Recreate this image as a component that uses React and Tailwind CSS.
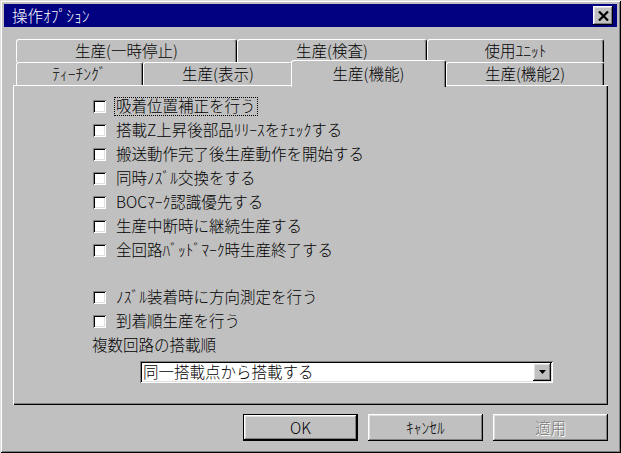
const raised =
  "shadow-[inset_-1px_-1px_0_#000,inset_1px_1px_0_#fff,inset_-2px_-2px_0_#808080,inset_2px_2px_0_#dfdfdf]"

const Checkbox = ({ label, focused = false }) => (
  <div className="flex items-center h-[24px] pl-[80px]">
    <span className="w-[13px] h-[13px] shrink-0 bg-white shadow-[inset_1px_1px_0_#808080,inset_-1px_-1px_0_#fff,inset_2px_2px_0_#000,inset_-2px_-2px_0_#dfdfdf]" />
    <span
      className={`ml-[8px] h-[19px] flex items-center px-[1px] border ${
        focused ? "border-dotted border-black" : "border-transparent"
      }`}
    >
      {label}
    </span>
  </div>
)

const Tab = ({ label, width }) => (
  <div
    className={`${width} h-full flex items-center justify-center border-l border-t border-white border-r border-r-black rounded-t-[3px] shadow-[inset_-1px_0_0_#808080]`}
  >
    {label}
  </div>
)

const Button = ({ children, isDefault = false, disabled = false }) => (
  <div
    className={`w-[115px] h-[27px] flex items-center justify-center ${
      isDefault ? "border border-black" : ""
    }`}
  >
    <div className={`w-full h-full flex items-center justify-center ${raised}`}>
      <span className={disabled ? "text-[#808080] [text-shadow:1px_1px_0_#fff]" : ""}>{children}</span>
    </div>
  </div>
)

export default function App() {
  const firstGroup = [
    "搭載Z上昇後部品ﾘﾘｰｽをﾁｪｯｸする",
    "搬送動作完了後生産動作を開始する",
    "同時ﾉｽﾞﾙ交換をする",
    "BOCﾏｰｸ認識優先する",
    "生産中断時に継続生産する",
    "全回路ﾊﾞｯﾄﾞﾏｰｸ時生産終了する",
  ]

  return (
    <div className="w-[621px] h-[453px] bg-[#c0c0c0] text-black text-[15.5px] font-light leading-none font-['Noto_Sans_CJK_JP',sans-serif] shadow-[inset_1px_1px_0_#dfdfdf,inset_-1px_-1px_0_#000,inset_2px_2px_0_#fff,inset_-2px_-2px_0_#808080] pt-[4px] flex flex-col">
      {/* title bar */}
      <div className="mx-[4px] h-[23px] bg-[#000080] flex items-center pl-[8px] pr-[4px]">
        <span className="text-white">操作ｵﾌﾟｼｮﾝ</span>
        <div className={`ml-auto w-[20px] h-[19px] bg-[#c0c0c0] flex items-center justify-center ${raised}`}>
          <svg width="11" height="10" viewBox="0 0 11 10">
            <path d="M1 0.5 L10 9.5 M10 0.5 L1 9.5" stroke="#000" strokeWidth="2.2" />
          </svg>
        </div>
      </div>

      {/* tabs + panel */}
      <div className="mt-[12px] px-[13px]">
        <div className="flex pl-[3px] h-[23px]">
          <Tab label="生産(一時停止)" width="w-[221px]" />
          <Tab label="生産(検査)" width="w-[190px]" />
          <Tab label="使用ﾕﾆｯﾄ" width="w-[177px]" />
        </div>
        <div className="flex pl-[3px] h-[23px]">
          <Tab label="ﾃｨｰﾁﾝｸﾞ" width="w-[127px]" />
          <Tab label="生産(表示)" width="w-[150px]" />
          <div className="relative z-10 -ml-[2px] -mt-[2px] w-[155px] h-[27px] bg-[#c0c0c0] flex justify-center pt-[5px] border-l border-t border-white border-r border-r-black rounded-t-[3px] shadow-[inset_-1px_0_0_#808080]">
            生産(機能)
          </div>
          <Tab label="生産(機能2)" width="w-[158px]" />
        </div>

        <div className="h-[320px] pt-[9px] flex flex-col shadow-[inset_1px_1px_0_#fff,inset_-1px_-1px_0_#000,inset_-2px_-2px_0_#808080]">
          <Checkbox label="吸着位置補正を行う" focused />
          {firstGroup.map((label) => (
            <Checkbox key={label} label={label} />
          ))}
          <div className="mt-[23px]">
            <Checkbox label="ﾉｽﾞﾙ装着時に方向測定を行う" />
            <Checkbox label="到着順生産を行う" />
          </div>
          <div className="h-[24px] flex items-center pl-[79px]">複数回路の搭載順</div>

          {/* combo box */}
          <div className="mt-[4px] ml-[127px] w-[413px] h-[22px] bg-white flex items-center shadow-[inset_1px_1px_0_#808080,inset_-1px_-1px_0_#fff,inset_2px_2px_0_#000,inset_-2px_-2px_0_#dfdfdf] p-[2px]">
            <span className="pl-[1px]">同一搭載点から搭載する</span>
            <div className={`ml-auto w-[18px] h-full bg-[#c0c0c0] flex items-center justify-center ${raised}`}>
              <svg width="7" height="4" viewBox="0 0 7 4">
                <path d="M0 0 H7 L3.5 4 Z" fill="#000" />
              </svg>
            </div>
          </div>
        </div>
      </div>

      {/* buttons */}
      <div className="mt-[9px] flex justify-end gap-[10px] pr-[13px]">
        <Button isDefault>OK</Button>
        <Button>ｷｬﾝｾﾙ</Button>
        <Button disabled>適用</Button>
      </div>
    </div>
  )
}
